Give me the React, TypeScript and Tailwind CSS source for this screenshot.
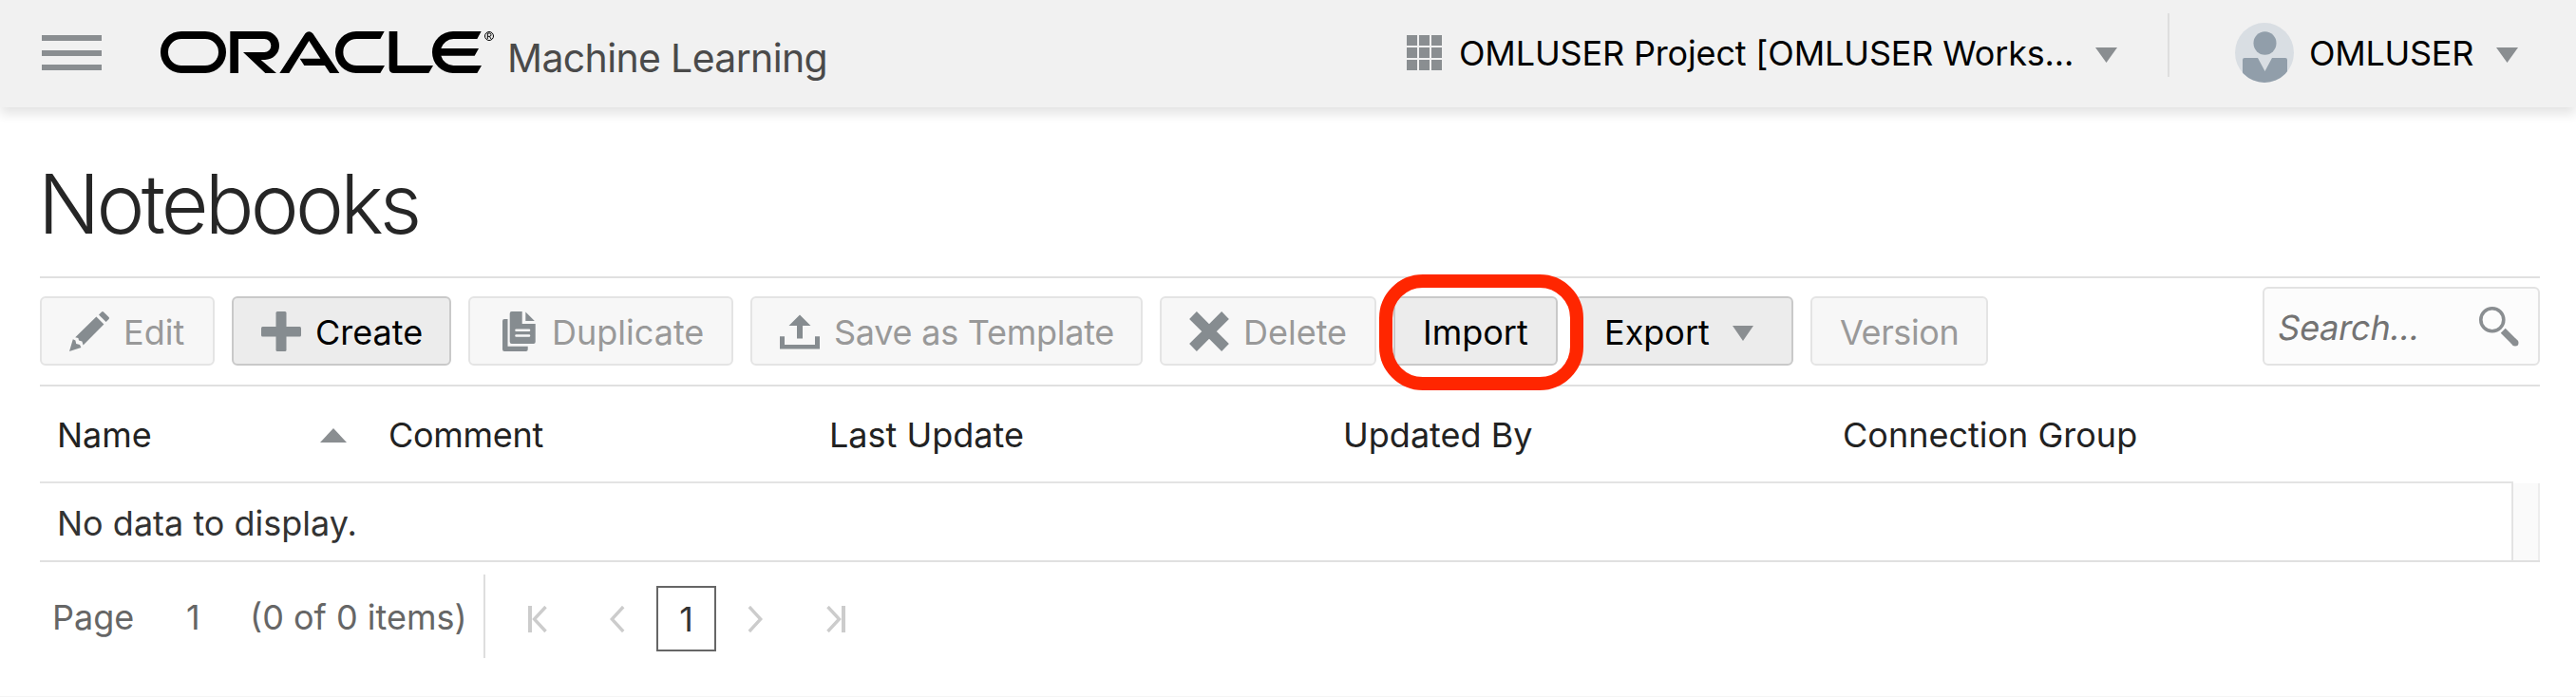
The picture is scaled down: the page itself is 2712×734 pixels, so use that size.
import type { ReactNode } from "react";

function OracleLogo() {
  return (
    <svg className="h-[70px] w-[370px] shrink-0" viewBox="0 0 1110 210" role="img" aria-label="Oracle">
      <rect x="39" y="48" width="183" height="108" rx="54" fill="none" stroke="#000" strokeWidth="24" />
      <path d="M247 168V36H357A45 45 0 0 1 357 126H344L393 168H358L288 102H355A21 21 0 0 0 355 60H273V168Z" />
      <path d="M403 168L484 43Q496 30 508 43L592 168H562L546 144H481L467 122H532L496 66L433 168Z" />
      <path d="M734 36L721 60H646A42 42 0 0 0 646 144H735L721 168H645A66 66 0 0 1 645 36Z" />
      <path d="M749 36H775V144H888L874 168H765Q749 168 749 152Z" />
      <path d="M1040 36L1027 60H952A42 42 0 0 0 913 90H1032L1019 113H913A42 42 0 0 0 952 144H1041L1027 168H951A66 66 0 0 1 951 36Z" />
      <circle cx="1065" cy="51" r="13.5" fill="none" stroke="#000" strokeWidth="3" />
      <path d="M1060 60V42H1066A5 5 0 0 1 1066 52H1060M1066 52L1071 60" fill="none" stroke="#000" strokeWidth="3" />
    </svg>
  );
}

function Caret({ className }: { className: string }) {
  return (
    <svg className={`shrink-0 fill-[#8a8e91] ${className}`} viewBox="0 0 23 16" preserveAspectRatio="none">
      <path d="M0 0H23L11.5 16Z" />
    </svg>
  );
}

function Icon({ children }: { children: ReactNode }) {
  return (
    <svg className="mr-[15px] size-[42px] shrink-0 fill-[#868c90]" viewBox="0 0 42 42">
      {children}
    </svg>
  );
}

const PencilIcon = () => (
  <Icon>
    <path d="M31 3.4L34 .4Q35 -.4 36 .4L41.6 6Q42.4 7 41.6 8L38.6 11Z" />
    <path d="M28.4 5.6L36.4 13.6L14.6 35.6L13.4 31.6L10 30.6L9.4 28L6.2 27.2Z" />
    <path d="M3.8 29.2L6.4 30.4L7.2 34L11 35L12.4 38L0 42Z" />
  </Icon>
);

const PlusIcon = () => (
  <Icon>
    <rect x="15.5" y="0" width="11" height="42" rx="1.5" />
    <rect x="0" y="16" width="42" height="10.5" rx="1.5" />
  </Icon>
);

const DuplicateIcon = () => (
  <Icon>
    <path d="M5 10Q5 8 7 8H10.5V36.7H31.7V40Q31.7 42 29.7 42H7Q5 42 5 40Z" />
    <path d="M14.7 0H25.7V13H39.7V32Q39.7 34 37.7 34H14.7Q12.7 34 12.7 32V2Q12.7 0 14.7 0Z" />
    <path d="M29.3 .4L38.8 10H29.3Z" />
    <path d="M19.5 19.8H33M19.5 25.5H33" stroke="#f7f7f7" strokeWidth="2.6" strokeLinecap="round" />
  </Icon>
);

const UploadIcon = () => (
  <Icon>
    <path d="M21 3.5L32.5 15H24V28.5H18V15H9.5Z" />
    <path d="M0 26.3H5V35H37V26.3H42V39.5H0Z" />
  </Icon>
);

const CrossIcon = () => (
  <Icon>
    <path d="M4 4L38 38M38 4L4 38" stroke="#868c90" strokeWidth="11" />
  </Icon>
);

interface ToolButtonProps {
  label: string;
  width: string;
  icon?: ReactNode;
  enabled?: boolean;
  children?: ReactNode;
}

function ToolButton({ label, width, icon, enabled, children }: ToolButtonProps) {
  const tone = enabled
    ? "border-[#c9c9c9] bg-[#ececec] text-black"
    : "border-[#e4e4e4] bg-[#f7f7f7] text-[#999999]";
  return (
    <button
      type="button"
      className={`relative flex h-[73px] shrink-0 items-center rounded-[6px] border-2 pl-[29px] whitespace-nowrap ${tone} ${width}`}
    >
      {icon}
      <span className="pt-[2px]">{label}</span>
      {children}
    </button>
  );
}

function Header() {
  return (
    <header className="relative flex h-[113px] items-center bg-[#f1f1f1] pr-[61px] pb-[2px] pl-[44px] text-black shadow-[0_7px_11px_rgba(0,0,0,0.11)]">
      <div className="flex w-[63px] flex-col gap-[9.5px]">
        <div className="h-[6px] bg-[#8a8e91]" />
        <div className="h-[6px] bg-[#8a8e91]" />
        <div className="h-[6px] bg-[#8a8e91]" />
      </div>
      <div className="ml-[53px] flex items-center">
        <OracleLogo />
        <span className="ml-[4px] pt-[10px] text-[41px] tracking-[-0.65px] whitespace-nowrap text-[#4a4a4a]">
          Machine Learning
        </span>
      </div>
      <div className="ml-auto flex items-center">
        <div className="mr-[18px] grid w-[37px] grid-cols-3 gap-[2px]">
          {Array.from({ length: 9 }, (_, i) => (
            <div key={i} className="h-[11px] bg-[#8a8e91]" />
          ))}
        </div>
        <span className="w-[670px] tracking-[-0.16px] whitespace-nowrap">OMLUSER Project [OMLUSER Works...</span>
        <Caret className="mt-[4px] h-[16px] w-[23px]" />
        <div className="mr-[69px] ml-[53px] h-[67px] w-[2px] -translate-y-[8px] bg-[#dedede]" />
        <svg className="mr-[16px] h-[63px] w-[62px]" viewBox="0 0 62 63">
          <clipPath id="avatar">
            <ellipse cx="31" cy="31.5" rx="31" ry="31.5" />
          </clipPath>
          <g clipPath="url(#avatar)">
            <rect width="62" height="63" fill="#d9dee3" />
            <ellipse cx="31.5" cy="21.5" rx="12" ry="12.2" fill="#919eaa" />
            <path d="M8 39Q8 37 10 37H24L31.5 51L39 37H53Q55 37 55 39V63H8Z" fill="#919eaa" />
          </g>
        </svg>
        <span className="w-[197px] tracking-[-0.3px]">OMLUSER</span>
        <Caret className="mt-[4px] h-[16px] w-[23px]" />
      </div>
    </header>
  );
}

function Toolbar() {
  return (
    <div className="flex h-[116px] items-end gap-[18px] border-y-2 border-[#e0e0e0] pb-[20px]">
      <ToolButton label="Edit" width="w-[184px]" icon={<PencilIcon />} />
      <ToolButton label="Create" width="w-[231px]" icon={<PlusIcon />} enabled />
      <ToolButton label="Duplicate" width="w-[279px]" icon={<DuplicateIcon />} />
      <ToolButton label="Save as Template" width="w-[413px] tracking-[-0.25px]" icon={<UploadIcon />} />
      <ToolButton label="Delete" width="w-[228px]" icon={<CrossIcon />} />
      <ToolButton label="Import" width="z-10 w-[173px]" enabled>
        <span className="absolute -top-[25px] -left-[17px] h-[122px] w-[215px] rounded-[46px] border-[14px] border-[#ff2600]" />
      </ToolButton>
      <ToolButton label="Export" width="w-[230px]" enabled>
        <Caret className="mt-[4px] ml-[24px] h-[16px] w-[22px]" />
      </ToolButton>
      <ToolButton label="Version" width="w-[187px] tracking-[-0.4px]" />
      <div className="ml-auto flex h-[83px] w-[292px] items-center rounded-[6px] border-2 border-[#e3e3e3] bg-[#fcfcfc] pr-[20px] pl-[15px]">
        <span className="-skew-x-[10deg] pt-[2px] tracking-[-0.2px] text-[#737373]">Search...</span>
        <svg className="ml-auto size-[42px]" viewBox="0 0 42 42" fill="none" stroke="#8a8e91">
          <circle cx="13.8" cy="13.8" r="12" strokeWidth="3.6" />
          <path d="M25.2 25.2L36.5 36.5" strokeWidth="7" />
          <circle cx="38" cy="38" r="1.75" strokeWidth="3.5" />
          <path d="M36 36L38 38" strokeWidth="7" />
        </svg>
      </div>
    </div>
  );
}

function NotebookTable() {
  return (
    <div>
      <div className="grid h-[100px] grid-cols-[349px_464px_541px_526px_1fr] items-center pt-[2px] pl-[18px] text-[#222222]">
        <div className="flex items-center">
          <span className="w-[277px]">Name</span>
          <Caret className="h-[15px] w-[28px] rotate-180" />
        </div>
        <span className="tracking-[-0.3px]">Comment</span>
        <span>Last Update</span>
        <span>Updated By</span>
        <span>Connection Group</span>
      </div>
      <div className="flex h-[85px] border-b-2 border-[#e0e0e0]">
        <div className="flex w-[2604px] items-center border-t-2 border-r-2 border-[#e3e3e3] pt-[2px] pl-[18px] text-[#333333]">
          No data to display.
        </div>
        <div className="mt-[2px] flex-1 border-r-2 border-[#ededed] bg-[#fafafa]" />
      </div>
    </div>
  );
}

function Pager() {
  return (
    <div className="flex h-[88px] items-center text-[#666666]">
      <span className="w-[141px] pt-[2px] pl-[13px]">Page</span>
      <span className="w-[80px] pt-[2px] pl-[13px]">1</span>
      <span className="w-[246px] pt-[2px] whitespace-nowrap">(0 of 0 items)</span>
      <div className="h-full w-[2px] bg-[#dedede]" />
      <div className="flex flex-1 items-center pt-[5px]">
        <svg className="ml-[45px] h-[28px] w-[20px]" viewBox="0 0 20 28" fill="none" stroke="#cccccc">
          <path d="M2 0V28" strokeWidth="4" />
          <path d="M18.5 1L6.5 14L18.5 27" strokeWidth="3.4" />
        </svg>
        <svg className="ml-[66px] h-[28px] w-[16px]" viewBox="0 0 16 28" fill="none" stroke="#cccccc">
          <path d="M14.2 1L2.2 14L14.2 27" strokeWidth="3.4" />
        </svg>
        <div className="ml-[33px] flex h-[69px] w-[63px] items-center justify-center border-2 border-[#666666] text-[#333333]">
          1
        </div>
        <svg className="ml-[33px] h-[28px] w-[16px]" viewBox="0 0 16 28" fill="none" stroke="#cccccc">
          <path d="M1.8 1L13.8 14L1.8 27" strokeWidth="3.4" />
        </svg>
        <svg className="ml-[67px] h-[28px] w-[20px]" viewBox="0 0 20 28" fill="none" stroke="#cccccc">
          <path d="M18 0V28" strokeWidth="4" />
          <path d="M1.5 1L13.5 14L1.5 27" strokeWidth="3.4" />
        </svg>
      </div>
    </div>
  );
}

export default function App() {
  return (
    <div className="h-[734px] w-[2712px] overflow-hidden border-b border-[#f5f5f5] bg-white font-['Inter',sans-serif] text-[36px] leading-[44px]">
      <Header />
      <main className="pr-[38px] pl-[42px]">
        <h1 className="-ml-[2px] flex h-[178px] items-center pt-[25px] text-[86px] leading-[104px] font-[260] tracking-[-3.8px] text-[#262626]">
          Notebooks
        </h1>
        <Toolbar />
        <NotebookTable />
        <div className="pt-[13px]">
          <Pager />
        </div>
      </main>
    </div>
  );
}
